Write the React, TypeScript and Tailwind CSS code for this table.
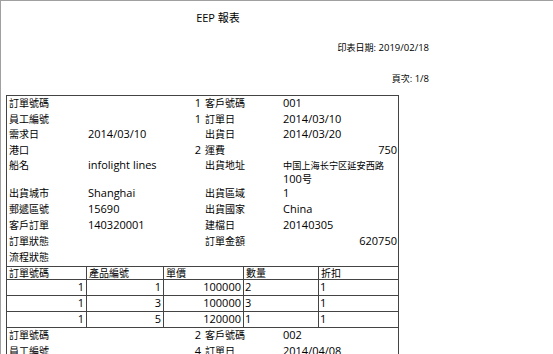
import React from "react";

const F = { fontFamily: '"Open Sans", "Noto Sans CJK TC", sans-serif' };

function T({ s, cjk = "text-[10px]" }: { s: string; cjk?: string }) {
  const parts = s.split(/([\u3000-\u9fff\uff00-\uffef]+)/);
  return (
    <>
      {parts.map((p, i) =>
        /[\u3000-\u9fff\uff00-\uffef]/.test(p) ? (
          <span key={i} className={cjk}>
            {p}
          </span>
        ) : (
          <React.Fragment key={i}>{p}</React.Fragment>
        )
      )}
    </>
  );
}

function InfoRow({
  l1,
  v1,
  l2,
  v2,
  r1,
  r2,
  h = "h-[16px]",
}: {
  l1: string;
  v1: React.ReactNode;
  l2: string;
  v2: React.ReactNode;
  r1?: boolean;
  r2?: boolean;
  h?: string;
}) {
  return (
    <div className={`grid grid-cols-[80px_116px_80px_1fr] ${h} leading-[13px] text-[11px]`}>
      <div className="pl-[2px]">
        <T s={l1} />
      </div>
      <div className={r1 ? "text-right pr-[2px]" : "pl-[1px]"}>{v1}</div>
      <div className="pl-[2px]">
        <T s={l2} />
      </div>
      <div className={r2 ? "text-right pr-[1px]" : "pl-[0px]"}>{v2}</div>
    </div>
  );
}

function DetailRow({ cells, header }: { cells: string[]; header?: boolean }) {
  const widths = ["w-[80px]", "w-[77px]", "w-[80px]", "w-[75px]", "flex-1"];
  return (
    <div className={`flex ${header ? "h-[13px] leading-[11px]" : "h-[16px] leading-[14px]"} border-t border-[#444] text-[11px]`}>
      {cells.map((c, i) => (
        <div
          key={i}
          className={`${widths[i]} ${i < 4 ? "border-r border-[#444]" : ""} ${
            header ? "pl-[2px]" : i < 3 ? "text-right pr-[2px]" : "pl-[1px]"
          }`}
        >
          <T s={c} />
        </div>
      ))}
    </div>
  );
}

export default function App() {
  return (
    <div className="w-[553px] h-[354px] overflow-hidden bg-white text-black" style={F}>
      <div className="h-full border-t border-l border-[#a0a0a0]">
        <div className="w-[434px] text-center text-[11px] leading-[14px] pt-[10px] h-[40px]">
          <T s="EEP 報表" cjk="text-[11px]" />
        </div>
        <div className="w-[428px] text-right text-[9.5px] leading-[14px] h-[31px]">
          <T s="印表日期: 2019/02/18" cjk="text-[9px]" />
        </div>
        <div className="w-[428px] text-right text-[9.5px] leading-[14px] h-[23px]">
          <T s="頁次: 1/8" cjk="text-[9px]" />
        </div>
        <div className="ml-[5px] w-[393px] border border-[#444] border-b-0">
          <InfoRow h="h-[15.5px]" l1="訂單號碼" v1="1" r1 l2="客戶號碼" v2="001" />
          <InfoRow h="h-[15.5px]" l1="員工編號" v1="1" r1 l2="訂單日" v2="2014/03/10" />
          <InfoRow h="h-[15.5px]" l1="需求日" v1="2014/03/10" l2="出貨日" v2="2014/03/20" />
          <InfoRow h="h-[15.5px]" l1="港口" v1="2" r1 l2="運費" v2="750" r2 />
          <InfoRow
            h="h-[28px]"
            l1="船名"
            v1="infolight lines"
            l2="出貨地址"
            v2={
              <span className="whitespace-nowrap">
                <T s="中国上海长宁区延安西路" cjk="text-[9.2px]" />
                <br />
                <T s="100号" />
              </span>
            }
          />
          <InfoRow l1="出貨城市" v1="Shanghai" l2="出貨區域" v2="1" />
          <InfoRow l1="郵遞區號" v1="15690" l2="出貨國家" v2="China" />
          <InfoRow l1="客戶訂單" v1="140320001" l2="建檔日" v2="20140305" />
          <InfoRow l1="訂單狀態" v1="" l2="訂單金額" v2="620750" r2 />
          <InfoRow l1="流程狀態" v1="" l2="" v2="" />
          <DetailRow header cells={["訂單號碼", "產品編號", "單價", "數量", "折扣"]} />
          <DetailRow cells={["1", "1", "100000", "2", "1"]} />
          <DetailRow cells={["1", "3", "100000", "3", "1"]} />
          <DetailRow cells={["1", "5", "120000", "1", "1"]} />
          <div className="border-t border-[#444]" />
          <InfoRow l1="訂單號碼" v1="2" r1 l2="客戶號碼" v2="002" />
          <InfoRow l1="員工編號" v1="4" r1 l2="訂單日" v2="2014/04/08" />
        </div>
      </div>
    </div>
  );
}
